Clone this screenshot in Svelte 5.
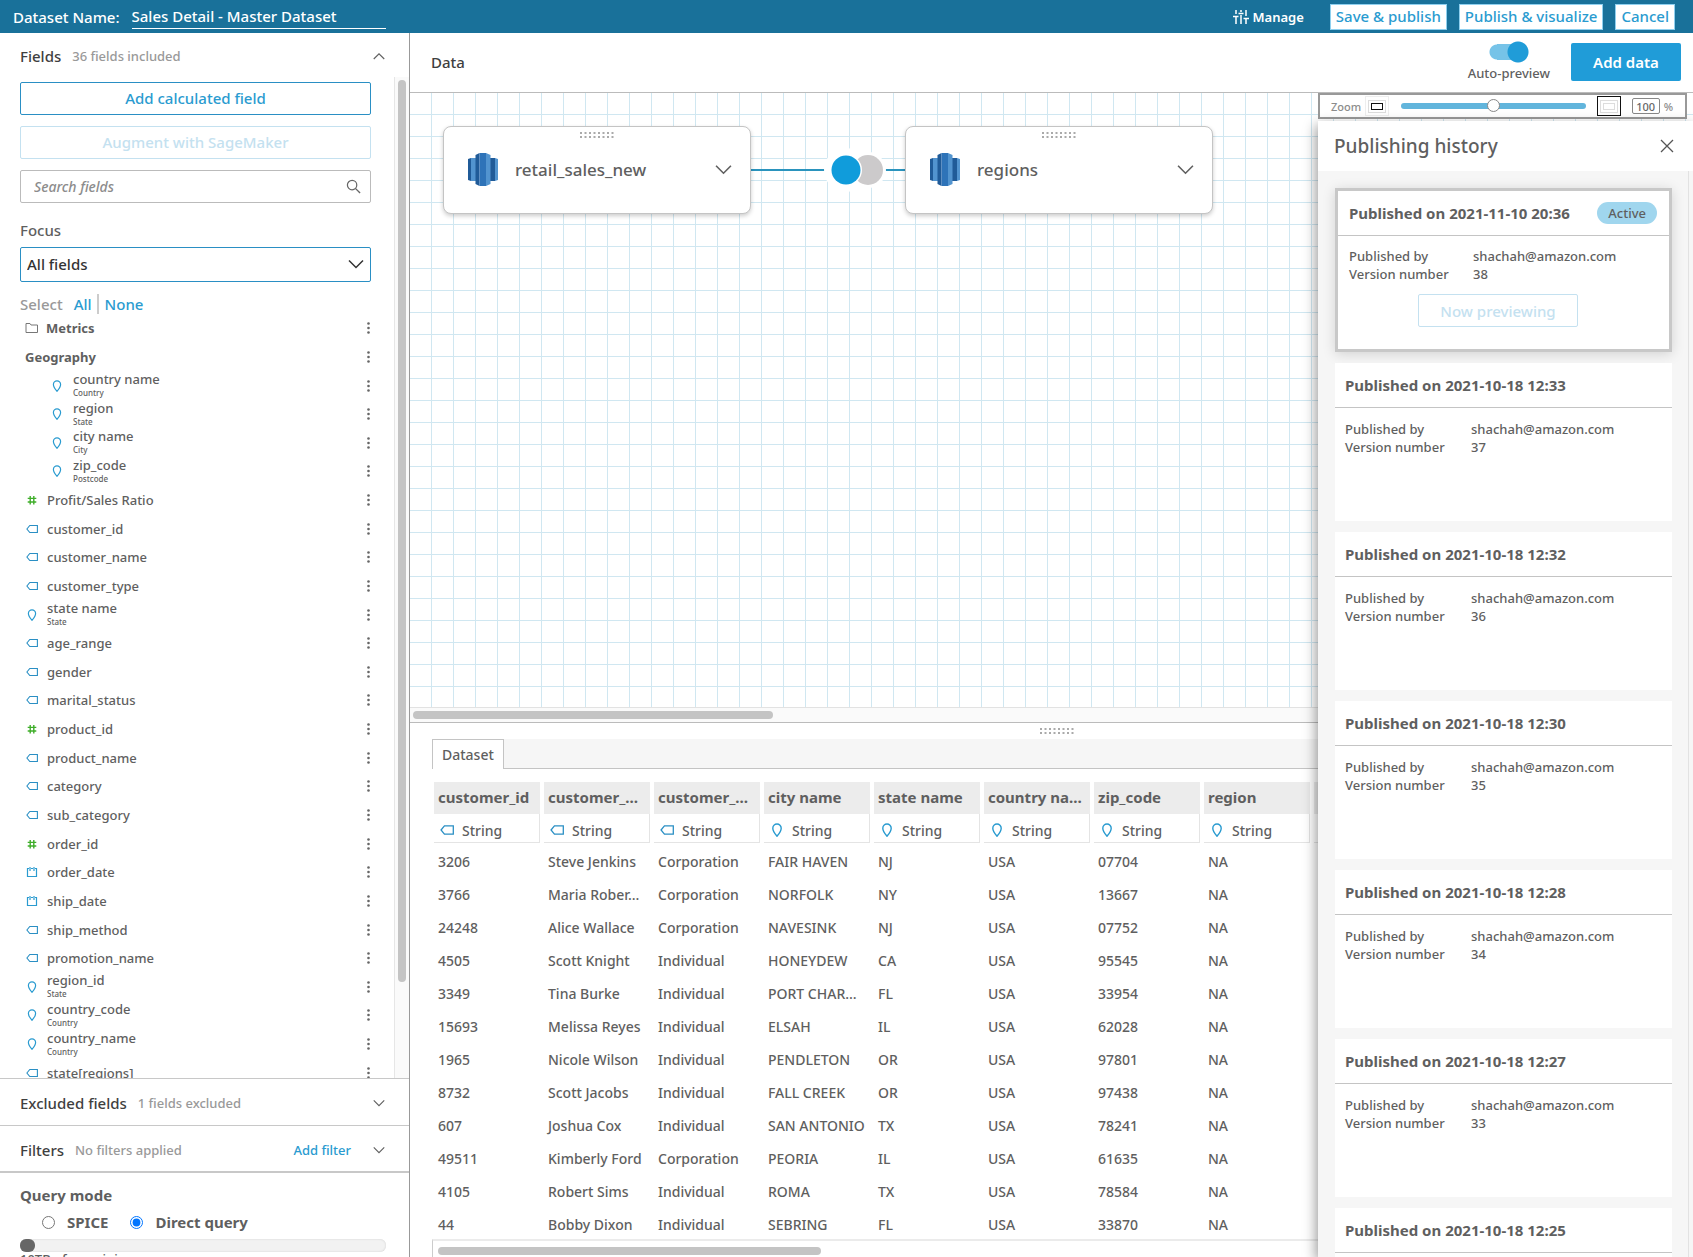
<script lang="ts">
  type Kind = 'folder' | 'pin' | 'number' | 'tag' | 'date' | 'none';

  interface Field {
    name: string;
    kind: Kind;
    geo?: string;
    nested?: boolean;
    group?: boolean;
  }

  const fields: Field[] = [
    {name: 'Metrics', kind: 'folder', group: true},
    {name: 'Geography', kind: 'none', group: true},
    {name: 'country name', kind: 'pin', geo: 'Country', nested: true},
    {name: 'region', kind: 'pin', geo: 'State', nested: true},
    {name: 'city name', kind: 'pin', geo: 'City', nested: true},
    {name: 'zip_code', kind: 'pin', geo: 'Postcode', nested: true},
    {name: 'Profit/Sales Ratio', kind: 'number'},
    {name: 'customer_id', kind: 'tag'},
    {name: 'customer_name', kind: 'tag'},
    {name: 'customer_type', kind: 'tag'},
    {name: 'state name', kind: 'pin', geo: 'State'},
    {name: 'age_range', kind: 'tag'},
    {name: 'gender', kind: 'tag'},
    {name: 'marital_status', kind: 'tag'},
    {name: 'product_id', kind: 'number'},
    {name: 'product_name', kind: 'tag'},
    {name: 'category', kind: 'tag'},
    {name: 'sub_category', kind: 'tag'},
    {name: 'order_id', kind: 'number'},
    {name: 'order_date', kind: 'date'},
    {name: 'ship_date', kind: 'date'},
    {name: 'ship_method', kind: 'tag'},
    {name: 'promotion_name', kind: 'tag'},
    {name: 'region_id', kind: 'pin', geo: 'State'},
    {name: 'country_code', kind: 'pin', geo: 'Country'},
    {name: 'country_name', kind: 'pin', geo: 'Country'},
    {name: 'state[regions]', kind: 'tag'}
  ];

  const columns: {name: string; kind: Kind}[] = [
    {name: 'customer_id', kind: 'tag'},
    {name: 'customer_…', kind: 'tag'},
    {name: 'customer_…', kind: 'tag'},
    {name: 'city name', kind: 'pin'},
    {name: 'state name', kind: 'pin'},
    {name: 'country na…', kind: 'pin'},
    {name: 'zip_code', kind: 'pin'},
    {name: 'region', kind: 'pin'}
  ];

  const rows = [
    ['3206', 'Steve Jenkins', 'Corporation', 'FAIR HAVEN', 'NJ', 'USA', '07704', 'NA'],
    ['3766', 'Maria Rober…', 'Corporation', 'NORFOLK', 'NY', 'USA', '13667', 'NA'],
    ['24248', 'Alice Wallace', 'Corporation', 'NAVESINK', 'NJ', 'USA', '07752', 'NA'],
    ['4505', 'Scott Knight', 'Individual', 'HONEYDEW', 'CA', 'USA', '95545', 'NA'],
    ['3349', 'Tina Burke', 'Individual', 'PORT CHAR…', 'FL', 'USA', '33954', 'NA'],
    ['15693', 'Melissa Reyes', 'Individual', 'ELSAH', 'IL', 'USA', '62028', 'NA'],
    ['1965', 'Nicole Wilson', 'Individual', 'PENDLETON', 'OR', 'USA', '97801', 'NA'],
    ['8732', 'Scott Jacobs', 'Individual', 'FALL CREEK', 'OR', 'USA', '97438', 'NA'],
    ['607', 'Joshua Cox', 'Individual', 'SAN ANTONIO', 'TX', 'USA', '78241', 'NA'],
    ['49511', 'Kimberly Ford', 'Corporation', 'PEORIA', 'IL', 'USA', '61635', 'NA'],
    ['4105', 'Robert Sims', 'Individual', 'ROMA', 'TX', 'USA', '78584', 'NA'],
    ['44', 'Bobby Dixon', 'Individual', 'SEBRING', 'FL', 'USA', '33870', 'NA']
  ];

  const versions = [
    {date: '2021-11-10 20:36', version: 38, active: true},
    {date: '2021-10-18 12:33', version: 37},
    {date: '2021-10-18 12:32', version: 36},
    {date: '2021-10-18 12:30', version: 35},
    {date: '2021-10-18 12:28', version: 34},
    {date: '2021-10-18 12:27', version: 33},
    {date: '2021-10-18 12:25', version: 32}
  ];

  const tables = [
    {name: 'retail_sales_new', slot: 'first'},
    {name: 'regions', slot: 'second'}
  ];

  let datasetName = $state('Sales Detail - Master Dataset');
  let search = $state('');
  let focus = $state('All fields');
  let autoPreview = $state(true);
  let zoom = $state(100);
  let queryMode = $state('direct');
</script>

{#snippet fieldIcon(kind: Kind)}
  {#if kind === 'folder'}
    <svg class="icon" width="14" height="12" viewBox="0 0 14 12">
      <path d="M1 10.5V1.5h4l1 1.5h6.5v7.5z" fill="none" stroke="#777" />
    </svg>
  {:else if kind === 'pin'}
    <svg class="icon" width="12" height="12" viewBox="0 0 12 12">
      <path
        d="M6 11.3C4.6 9.6 2.4 7 2.4 4.4a3.6 3.6 0 0 1 7.2 0C9.6 7 7.4 9.6 6 11.3z"
        fill="none"
        stroke="#2a9bd0"
        stroke-width="1.2" />
    </svg>
  {:else if kind === 'number'}
    <svg class="icon" width="12" height="12" viewBox="0 0 12 12">
      <path d="M4.2 2v8.5M7.8 2v8.5M1.7 4.4h8.6M1.7 8h8.6" fill="none" stroke="#3fae2a" stroke-width="1.4" />
    </svg>
  {:else if kind === 'tag'}
    <svg class="icon" width="12" height="12" viewBox="0 0 12 12">
      <path d="M.9 6 3.8 2.5h7.6v7H3.8z" fill="none" stroke="#2a8fc4" stroke-width="1.1" />
    </svg>
  {:else if kind === 'date'}
    <svg class="icon" width="12" height="12" viewBox="0 0 12 12">
      <path d="M3 2.5H1.5v8h9v-8H9M5 2.5h2M4 1v4M8 1v4" fill="none" stroke="#2a9bd0" stroke-width="1.2" />
    </svg>
  {/if}
{/snippet}

{#snippet chevron(size: number, up: boolean)}
  <svg width={size} height={size} viewBox="0 0 16 16">
    <path d={up ? 'M1 12 8 5 15 12' : 'M1 4.5 8 11.5 15 4.5'} fill="none" stroke="currentColor" stroke-width="1.5" />
  </svg>
{/snippet}

{#snippet grip()}
  <svg class="grip" width="34" height="8" viewBox="0 0 34 8">
    <path d="M0 2h34M0 6h34" stroke="#aaa" stroke-width="2" stroke-dasharray="2 2.5" />
  </svg>
{/snippet}

<div class="app">
  <header class="topbar">
    <label for="dataset-name">Dataset Name:</label>
    <input id="dataset-name" class="dataset-name" bind:value={datasetName} />
    <button class="manage">
      <svg width="16" height="14" viewBox="0 0 16 14">
        <path
          d="M3 0v4M3 7v7M8 0v2M8 5v9M13 0v6M13 9v5M0 6.5h5.500M5.500 3.500h5M10.500 8.500h5.500"
          fill="none"
          stroke="#fff"
          stroke-width="1.5" />
      </svg>
      Manage
    </button>
    <button class="top-button">Save &amp; publish</button>
    <button class="top-button">Publish &amp; visualize</button>
    <button class="top-button">Cancel</button>
  </header>

  <div class="body">
    <aside class="sidebar">
      <div class="section-head">
        <h2>Fields</h2>
        <span class="note">36 fields included</span>
        <button class="toggle" aria-label="Collapse fields">{@render chevron(12, true)}</button>
      </div>

      <div class="fields-scroll">
        <div class="fields">
          <button class="wide-button">Add calculated field</button>
          <button class="wide-button" disabled>Augment with SageMaker</button>
          <div class="search">
            <input type="search" placeholder="Search fields" aria-label="Search fields" bind:value={search} />
            <svg width="15" height="15" viewBox="0 0 16 16">
              <circle cx="6.5" cy="6.5" r="5" fill="none" stroke="#666" stroke-width="1.3" />
              <path d="m10 10 5 5" stroke="#666" stroke-width="1.5" />
            </svg>
          </div>
          <label class="focus-label" for="focus">Focus</label>
          <div class="select">
            <select id="focus" bind:value={focus}>
              <option>All fields</option>
            </select>
            {@render chevron(16, false)}
          </div>
          <div class="select-links">
            Select
            <a href="#all">All</a>
            <a class="none" href="#none">None</a>
          </div>
          <ul>
            {#each fields as field}
              <li class:group={field.group} class:nested={field.nested}>
                {@render fieldIcon(field.kind)}
                <span class="field-name">
                  {field.name}
                  {#if field.geo}<small>{field.geo}</small>{/if}
                </span>
                <button class="more" aria-label="Options for {field.name}">
                  <svg width="3" height="12" viewBox="0 0 3 12">
                    <circle cx="1.5" cy="1.5" r="1.3" fill="#666" />
                    <circle cx="1.5" cy="6" r="1.3" fill="#666" />
                    <circle cx="1.5" cy="10.5" r="1.3" fill="#666" />
                  </svg>
                </button>
              </li>
            {/each}
          </ul>
        </div>
        <div class="v-track"><div class="v-thumb"></div></div>
      </div>

      <div class="section-head ruled">
        <h2>Excluded fields</h2>
        <span class="note">1 fields excluded</span>
        <button class="toggle" aria-label="Expand excluded fields">{@render chevron(12, false)}</button>
      </div>
      <div class="section-head ruled filters">
        <h2>Filters</h2>
        <span class="note">No filters applied</span>
        <a class="add-filter" href="#filter">Add filter</a>
        <button class="toggle" aria-label="Expand filters">{@render chevron(12, false)}</button>
      </div>
      <div class="query">
        <h3>Query mode</h3>
        <div class="modes">
          <label><input type="radio" name="mode" value="spice" bind:group={queryMode} />SPICE</label>
          <label><input type="radio" name="mode" value="direct" bind:group={queryMode} />Direct query</label>
        </div>
        <div class="capacity"><div class="used"></div></div>
        <p>10TB of remaining</p>
      </div>
    </aside>

    <main>
      <div class="data-head">
        <h2>Data</h2>
        <label class="switch">
          <input type="checkbox" role="switch" bind:checked={autoPreview} />
          Auto-preview
        </label>
        <button class="add-data">Add data</button>
      </div>

      <div class="workspace">
        <div class="canvas">
          <svg class="join" width="154" height="44" viewBox="0 0 154 44">
            <path d="M0 22h154" stroke="#2a93bd" stroke-width="2" />
            <circle cx="95" cy="22" r="22" fill="#fff" />
            <circle cx="117" cy="22" r="18" fill="#fff" />
            <circle cx="117" cy="22" r="15" fill="#cccacb" />
            <circle cx="95" cy="22" r="16" fill="#fff" />
            <circle cx="95" cy="22" r="14.5" fill="#109cdb" />
          </svg>
          {#each tables as table}
            <div class="node {table.slot}">
              {@render grip()}
              <svg class="redshift" width="30" height="33" viewBox="0 0 30 33">
                <path d="M0 6 3 5v23l-3-1z" fill="#205b98" />
                <path d="M3 5h5v23H3z" fill="#5294cf" />
                <path d="m30 6-3-1v23l3-1z" fill="#5294cf" />
                <path d="M22 5h5v23h-5z" fill="#205b98" />
                <path d="m7.5 2 4-2v33l-4-2z" fill="#205b98" />
                <path d="M11.5 0H18v33h-6.500z" fill="#2e73b8" />
                <path d="m18 0 4.5 2v29L18 33z" fill="#5294cf" />
              </svg>
              <span>{table.name}</span>
              <button aria-label="Options for {table.name}">{@render chevron(17, false)}</button>
            </div>
          {/each}
        </div>
        <div class="h-track"><div class="h-thumb"></div></div>

        <section class="preview">
          <div class="resize">{@render grip()}</div>
          <div class="tabs"><button>Dataset</button></div>
          <div class="table-wrap">
            <table>
              <thead>
                <tr>
                  {#each columns as column}
                    <th>{column.name}</th>
                  {/each}
                  <th></th>
                </tr>
              </thead>
              <tbody>
                <tr class="types">
                  {#each columns as column}
                    <td>{@render fieldIcon(column.kind)}String</td>
                  {/each}
                  <td></td>
                </tr>
                {#each rows as row}
                  <tr>
                    {#each row as cell}
                      <td>{cell}</td>
                    {/each}
                  </tr>
                {/each}
              </tbody>
            </table>
          </div>
          <div class="table-track"><div class="h-thumb"></div></div>
        </section>

        <div class="zoom">
          <label for="zoom">Zoom</label>
          <button class="zoom-out" aria-label="Zoom out"><i></i></button>
          <input id="zoom" type="range" min="0" max="200" bind:value={zoom} />
          <button class="zoom-in" aria-label="Zoom in"><i></i></button>
          <input class="percent" aria-label="Zoom percent" bind:value={zoom} />
          <span>%</span>
        </div>

        <aside class="history">
          <div class="history-head">
            <h2>Publishing history</h2>
            <button aria-label="Close">
              <svg width="14" height="14" viewBox="0 0 14 14">
                <path d="m1 1 12 12M13 1 1 13" stroke="#555" stroke-width="1.3" />
              </svg>
            </button>
          </div>
          <div class="versions">
            {#each versions as item}
              <article class:active={item.active}>
                <h3>
                  Published on {item.date}
                  {#if item.active}<span class="badge">Active</span>{/if}
                </h3>
                <dl>
                  <dt>Published by</dt>
                  <dd>shachah@amazon.com</dd>
                  <dt>Version number</dt>
                  <dd>{item.version}</dd>
                </dl>
                {#if item.active}<button disabled>Now previewing</button>{/if}
              </article>
            {/each}
          </div>
        </aside>
      </div>
    </main>
  </div>
</div>

<style>
  :global(body) {
    margin: 0;
  }

  .app {
    display: flex;
    flex-direction: column;
    height: 100vh;
    overflow: hidden;
    background: #fff;
    color: #5f5f5f;
    font-family: 'Noto Sans', 'Open Sans', sans-serif;
    font-size: 13px;
    font-weight: 500;
  }

  .app * {
    box-sizing: border-box;
  }

  button,
  input,
  select {
    margin: 0;
    padding: 0;
    border: none;
    background: none;
    color: inherit;
    font: inherit;
  }

  h2,
  h3,
  p,
  ul,
  dl,
  dd {
    margin: 0;
    padding: 0;
  }

  a {
    color: #2a9bd0;
    text-decoration: none;
  }

  svg {
    display: block;
    flex: none;
  }

  /* top bar */

  .topbar {
    display: flex;
    flex: none;
    align-items: center;
    height: 33px;
    padding: 0 18px 0 13px;
    background: #19719a;
    color: #fff;
    font-size: 15px;
  }

  .dataset-name {
    width: 254px;
    height: 25px;
    margin: 0 auto 0 12px;
    border-bottom: 1px solid #fff;
  }

  .manage {
    display: flex;
    gap: 4px;
    align-items: center;
    margin-right: 14px;
    font-size: 13px;
    font-weight: 600;
  }

  .top-button {
    height: 26px;
    margin-left: 12px;
    padding: 0 5px 2px;
    border: 1px solid #8fd0ef;
    background: #fff;
    color: #2a9bd0;
  }

  .body {
    display: flex;
    flex: 1;
    min-height: 0;
  }

  /* sidebar */

  .sidebar {
    display: flex;
    flex: none;
    flex-direction: column;
    width: 410px;
    border-right: 1px solid #999;
  }

  .section-head {
    display: flex;
    flex: none;
    align-items: center;
    height: 44px;
    padding: 2px 24px 0 20px;
  }

  .section-head.ruled {
    height: 47px;
    border-top: 1px solid #c8c8c8;
  }

  .section-head.filters {
    height: 46px;
  }

  h2 {
    color: #3f3f3f;
    font-size: 15px;
    font-weight: 500;
  }

  .note {
    margin: 0 auto 0 11px;
    color: #999;
  }

  .add-filter {
    margin-right: 22px;
  }

  .fields-scroll {
    display: flex;
    flex: 1;
    min-height: 0;
    overflow: hidden;
  }

  .fields {
    flex: 1;
    padding: 5px 23px 0 20px;
    font-size: 15px;
  }

  .wide-button {
    width: 100%;
    height: 33px;
    margin-bottom: 11px;
    padding-bottom: 2px;
    border: 1px solid #2a8fc4;
    border-radius: 2px;
    color: #2a9bd0;
  }

  .wide-button:disabled {
    border-color: #c4e1f0;
    color: #c4e1f0;
  }

  .search {
    display: flex;
    align-items: center;
    height: 33px;
    padding: 0 9px 0 13px;
    border: 1px solid #bbb;
    border-radius: 2px;
  }

  .search input {
    flex: 1;
    font-size: 14px;
  }

  .search input::placeholder {
    color: #8c8c8c;
    font-style: italic;
    opacity: 1;
  }

  .focus-label {
    display: block;
    padding: 16px 0 6px;
    line-height: 22px;
  }

  .select {
    display: flex;
    align-items: center;
    height: 35px;
    padding: 0 6px 2px;
    border: 1px solid #2a8fc4;
    border-radius: 2px;
    color: #333;
  }

  .select select {
    flex: 1;
    appearance: none;
  }

  .select-links {
    display: flex;
    padding: 12px 0 0;
    color: #999;
    line-height: 20px;
  }

  .select-links a {
    margin-left: 11px;
  }

  .select-links .none {
    margin-left: 5px;
    padding-left: 6px;
    border-left: 2px solid #ccc;
  }

  ul {
    display: grid;
    grid-auto-rows: 1fr;
    height: 773px;
    font-size: 13px;
    list-style: none;
  }

  li {
    display: flex;
    gap: 9px;
    align-items: center;
    min-height: 0;
    padding: 0 1px 0 6px;
  }

  li.group {
    padding-left: 5px;
    font-weight: 700;
  }

  li.group .icon {
    margin-right: -2px;
  }

  li.nested {
    gap: 10px;
    padding-left: 31px;
  }

  .field-name {
    flex: 1;
    line-height: 16px;
  }

  small {
    display: block;
    padding-bottom: 2px;
    font-size: 8px;
    line-height: 11px;
  }

  .v-track {
    width: 15px;
    padding: 3px 3px 0;
    border-left: 1px solid #e6e6e6;
    background: #fafafa;
  }

  .v-thumb {
    height: calc(100% - 96px);
    border-radius: 4px;
    background: #c4c4c4;
  }

  .query {
    flex: none;
    height: 86px;
    padding: 11px 23px 0 20px;
    border-top: 2px solid #c8c8c8;
    overflow: hidden;
  }

  .query h3 {
    font-size: 15px;
    line-height: 22px;
  }

  .modes {
    display: flex;
    gap: 22px;
    padding: 5px 0 6px 22px;
    font-size: 15px;
    font-weight: 700;
    line-height: 22px;
  }

  .modes label {
    display: flex;
    gap: 12px;
    align-items: center;
  }

  .modes input {
    width: 13px;
    height: 13px;
  }

  .capacity {
    height: 13px;
    border-radius: 6px;
    background: #f2f2f2;
    box-shadow: inset 0 0 2px #ccc;
  }

  .used {
    width: 15px;
    height: 13px;
    border-radius: 6px;
    background: #666;
  }

  .query p {
    line-height: 14px;
  }

  /* data header */

  main {
    display: flex;
    flex: 1;
    flex-direction: column;
    min-width: 0;
  }

  .data-head {
    display: flex;
    flex: none;
    align-items: center;
    height: 60px;
    padding: 0 12px 2px 21px;
    border-bottom: 1px solid #bbb;
  }

  .data-head h2 {
    margin-right: auto;
  }

  .switch {
    display: flex;
    flex-direction: column;
    align-items: center;
    margin-right: 21px;
    line-height: 20px;
  }

  .switch input {
    width: 40px;
    height: 22px;
    appearance: none;
    background:
      radial-gradient(circle at 29px 11px, #209cd8 10px, transparent 11px),
      linear-gradient(#76c3e8, #76c3e8) 8px 3px / 20px 16px no-repeat,
      radial-gradient(circle at 8px 11px, #76c3e8 7px, transparent 8px);
  }

  .add-data {
    width: 110px;
    height: 38px;
    border-radius: 2px;
    background: #209cd8;
    color: #fff;
    font-size: 15px;
    font-weight: 600;
  }

  /* join canvas */

  .workspace {
    position: relative;
    display: flex;
    flex: 1;
    flex-direction: column;
    min-height: 0;
  }

  .canvas {
    position: relative;
    flex: 1;
    background:
      linear-gradient(to left, #d0e7f1 1px, transparent 1px) 0 0 / 22px 22px,
      linear-gradient(to top, #d0e7f1 1px, transparent 1px) 0 0 / 22px 22px;
  }

  .node {
    position: absolute;
    top: 33px;
    display: flex;
    align-items: center;
    width: 308px;
    height: 88px;
    padding: 0 18px 2px 24px;
    border: 1px solid #c4c4c4;
    border-radius: 8px;
    background: #fff;
    box-shadow: 0 2px 4px rgba(0, 0, 0, 0.2);
    font-size: 17px;
  }

  .node.first {
    left: 33px;
  }

  .node.second {
    left: 495px;
  }

  .node .grip {
    position: absolute;
    top: 4px;
    left: 136px;
  }

  .node span {
    margin: 0 auto 0 17px;
  }

  .join {
    position: absolute;
    top: 55px;
    left: 341px;
  }

  .h-track {
    flex: none;
    height: 16px;
    padding: 3px;
    border-top: 1px solid #e2e2e2;
    border-bottom: 1px solid #bbb;
    background: #fafafa;
  }

  .h-thumb {
    width: 360px;
    height: 8px;
    border-radius: 4px;
    background: #c4c4c4;
  }

  /* dataset preview */

  .preview {
    flex: none;
    padding-left: 20px;
  }

  .resize {
    display: flex;
    justify-content: center;
    height: 16px;
    padding: 4px 10px 0 0;
  }

  .tabs {
    height: 30px;
    margin-left: 2px;
    border-bottom: 1px solid #c4c4c4;
    background: #f6f6f6;
  }

  .tabs button {
    height: 30px;
    padding: 0 9px;
    border: 1px solid #c4c4c4;
    border-bottom: none;
    background: #fff;
    font-size: 14px;
  }

  .table-wrap {
    padding-top: 13px;
    overflow: hidden;
  }

  table {
    width: 994px;
    border-spacing: 4px 0;
    table-layout: fixed;
  }

  th,
  td {
    height: 33px;
    padding: 4px 0 0 4px;
    font-size: 14px;
    text-align: left;
    white-space: nowrap;
  }

  th {
    height: 32px;
    padding: 0 0 3px 4px;
    background: #ececec;
    font-size: 15px;
    font-weight: 700;
  }

  .types td {
    height: 29px;
    padding: 4px 0 0 6px;
    border-right: 1px solid #e4e4e4;
    border-bottom: 1px solid #e4e4e4;
  }

  .types .icon {
    display: inline-block;
    width: 14px;
    height: 14px;
    margin-right: 8px;
    vertical-align: -1px;
  }

  .table-track {
    height: 18px;
    margin-left: 2px;
    padding: 6px 5px 0;
    border-top: 2px solid #ebebeb;
    border-left: 1px solid #ccc;
  }

  .table-track .h-thumb {
    width: 383px;
  }

  /* zoom bar */

  .zoom {
    position: absolute;
    top: 0;
    right: 6px;
    display: flex;
    align-items: center;
    width: 369px;
    height: 26px;
    padding: 0 12px 0 11px;
    border: 2px solid #999;
    background: #fff;
    color: #8c8c8c;
    font-size: 11px;
  }

  .zoom button {
    display: flex;
    align-items: center;
    justify-content: center;
    width: 24px;
    height: 20px;
    border: 1px solid #eee;
  }

  .zoom i {
    width: 12px;
    height: 7px;
    border: 1px solid #111;
    outline: 1px solid #ddd;
    outline-offset: 2px;
  }

  .zoom .zoom-out {
    margin: 0 12px 0 4px;
  }

  .zoom .zoom-in {
    margin: 0 11px;
    border-color: #111;
  }

  .zoom-in i {
    border-color: #ddd;
  }

  .zoom input[type='range'] {
    flex: 1;
    min-width: 0;
    height: 14px;
    appearance: none;
    background: none;
  }

  .zoom input[type='range']::-webkit-slider-runnable-track {
    height: 6px;
    border-radius: 3px;
    background: #62b5dc;
  }

  .zoom input[type='range']::-webkit-slider-thumb {
    width: 13px;
    height: 13px;
    margin-top: -4px;
    appearance: none;
    border: 1px solid #888;
    border-radius: 50%;
    background: #fff;
  }

  .zoom .percent {
    width: 28px;
    height: 16px;
    margin-right: 4px;
    border: 1px solid #888;
    border-radius: 2px;
    color: #666;
    text-align: center;
  }

  /* publishing history */

  .history {
    position: absolute;
    top: 28px;
    right: 0;
    bottom: 0;
    display: flex;
    flex-direction: column;
    width: 375px;
    background: #f6f6f6;
    box-shadow: -2px 4px 12px rgba(0, 0, 0, 0.4);
  }

  .history-head {
    display: flex;
    flex: none;
    align-items: center;
    justify-content: space-between;
    height: 50px;
    padding: 0 19px 0 16px;
    background: #fff;
  }

  .history-head h2 {
    color: #5f5f5f;
    font-size: 19px;
  }

  .versions {
    display: flex;
    flex: 1;
    flex-direction: column;
    gap: 11px;
    min-height: 0;
    margin-right: 4px;
    padding: 17px 16px 0 17px;
    border-right: 1px solid #e2e2e2;
    overflow: hidden;
  }

  article {
    flex: none;
    height: 158px;
    background: #fff;
  }

  article.active {
    height: 164px;
    border: 3px solid #c8c8c8;
    box-shadow: 0 2px 12px rgba(0, 0, 0, 0.15);
  }

  article h3 {
    display: flex;
    align-items: center;
    justify-content: space-between;
    height: 45px;
    padding: 0 12px 0 10px;
    border-bottom: 1px solid #c4c4c4;
    font-size: 15px;
    font-weight: 700;
  }

  .badge {
    padding: 0 11px;
    border-radius: 11px;
    background: #a0d6ee;
    font-size: 13px;
    font-weight: 500;
    line-height: 22px;
  }

  dl {
    display: grid;
    grid-template-columns: 126px 1fr;
    padding: 12px 10px 0;
    line-height: 18px;
  }

  .active dl {
    grid-template-columns: 124px 1fr;
    padding: 11px 11px 0;
  }

  .active h3 {
    padding-left: 11px;
  }

  article button {
    display: block;
    width: 160px;
    height: 33px;
    margin: 11px 0 0 80px;
    border: 1px solid #c4e1f0;
    border-radius: 2px;
    color: #c4e1f0;
    font-size: 15px;
  }
</style>
